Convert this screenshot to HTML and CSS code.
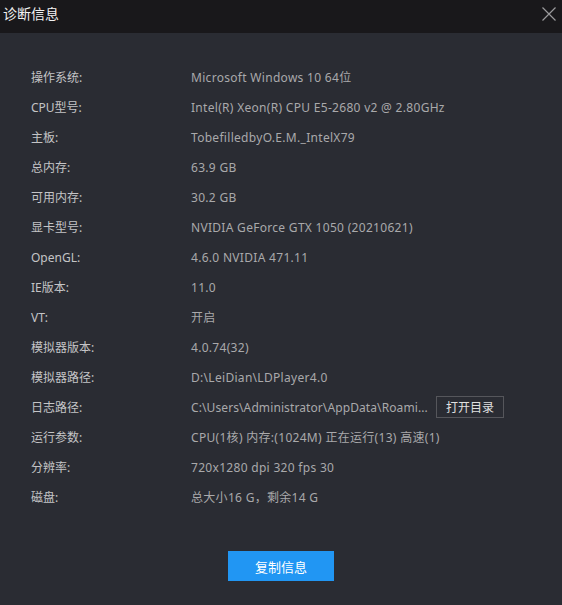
FILE: index.html
```html
<!DOCTYPE html>
<html lang="zh">
<head>
<meta charset="utf-8">
<link rel="stylesheet" href="styles.css">
</head>
<body>
<div class="dialog">
  <div class="titlebar">
    <span class="title">诊断信息</span>
    <span class="close"><svg width="14" height="14" viewBox="0 0 14 14"><path d="M0.5 0.5L13.5 13.5M13.5 0.5L0.5 13.5" stroke="#9a9a9c" stroke-width="1.2" fill="none"/></svg></span>
  </div>
  <div class="content">
    <div class="row"><span class="label">操作系统:</span><span class="value">Microsoft Windows 10 64位</span></div>
    <div class="row"><span class="label">CPU型号:</span><span class="value">Intel(R) Xeon(R) CPU E5-2680 v2 @ 2.80GHz</span></div>
    <div class="row"><span class="label">主板:</span><span class="value">TobefilledbyO.E.M._IntelX79</span></div>
    <div class="row"><span class="label">总内存:</span><span class="value">63.9 GB</span></div>
    <div class="row"><span class="label">可用内存:</span><span class="value">30.2 GB</span></div>
    <div class="row"><span class="label">显卡型号:</span><span class="value">NVIDIA GeForce GTX 1050 (20210621)</span></div>
    <div class="row"><span class="label">OpenGL:</span><span class="value">4.6.0 NVIDIA 471.11</span></div>
    <div class="row"><span class="label">IE版本:</span><span class="value">11.0</span></div>
    <div class="row"><span class="label">VT:</span><span class="value">开启</span></div>
    <div class="row"><span class="label">模拟器版本:</span><span class="value">4.0.74(32)</span></div>
    <div class="row"><span class="label">模拟器路径:</span><span class="value">D:\LeiDian\LDPlayer4.0</span></div>
    <div class="row"><span class="label">日志路径:</span><span class="value path">C:\Users\Administrator\AppData\Roami...</span><button class="open">打开目录</button></div>
    <div class="row"><span class="label">运行参数:</span><span class="value">CPU(1核) 内存:(1024M) 正在运行(13) 高速(1)</span></div>
    <div class="row"><span class="label">分辨率:</span><span class="value">720x1280 dpi 320 fps 30</span></div>
    <div class="row"><span class="label">磁盘:</span><span class="value">总大小16 G，剩余14 G</span></div>
  </div>
  <div class="footer"><button class="copy">复制信息</button></div>
</div>
</body>
</html>
```
FILE: styles.css
```css
* { box-sizing: border-box; }
html, body { margin: 0; padding: 0; }
body {
  width: 562px;
  height: 605px;
  background: #2a2c33;
  font-family: "Noto Sans", "Noto Sans CJK SC", sans-serif;
  overflow: hidden;
}
.dialog { display: flex; flex-direction: column; height: 605px; }
.titlebar {
  height: 33px;
  background: #19181b;
  display: flex;
  align-items: center;
  justify-content: space-between;
  padding: 0 6px 0 3px;
}
.title { color: #f2f2f2; font-size: 14px; line-height: 1; margin-top: -6px; }
.close { display: flex; margin-top: -6px; }
.content {
  padding: 29px 0 0 31px;
  display: flex;
  flex-direction: column;
}
.row {
  height: 30px;
  display: flex;
  align-items: center;
  font-size: 12px;
}
.label { width: 160px; color: #c4c4c6; }
.value { color: #a9a9ab; letter-spacing: 0.3px; }
.path { width: 245px; white-space: nowrap; overflow: hidden; letter-spacing: 0.1px; }
.open {
  font-family: inherit;
  background: transparent;
  border: 1px solid #55565b;
  color: #e0e0e0;
  font-size: 12px;
  height: 22px;
  width: 68px;
  padding: 0;
  cursor: pointer;
}
.footer { display: flex; justify-content: center; padding-top: 39px; }
.copy {
  font-family: inherit;
  width: 106px;
  height: 30px;
  background: #2196f3;
  border: none;
  color: #ffffff;
  font-size: 13px;
  padding: 0;
}
```
